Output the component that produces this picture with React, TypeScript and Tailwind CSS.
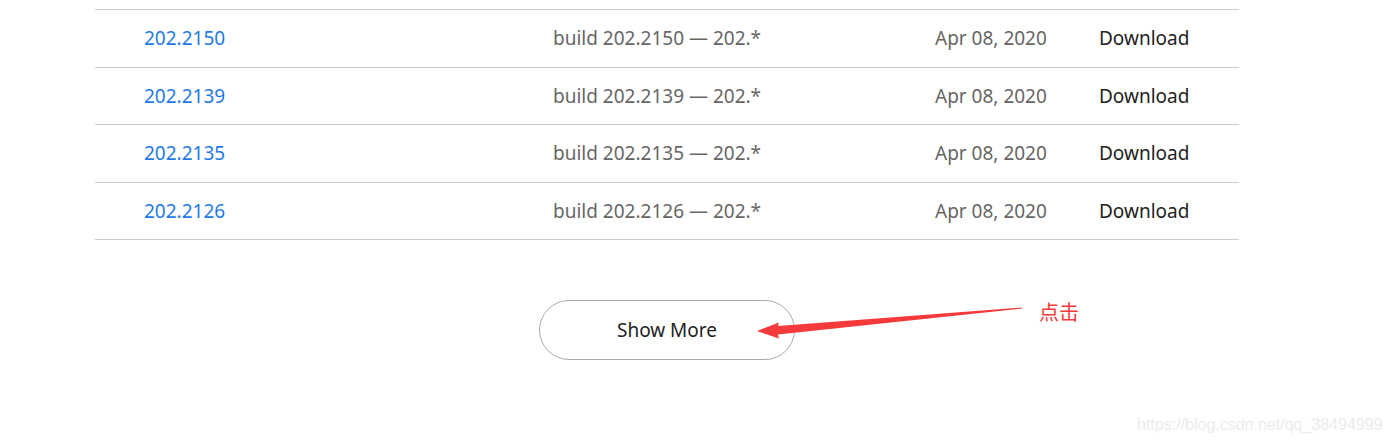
const rows = [
  { v: "202.2150", h: "h-[58px]" },
  { v: "202.2139", h: "h-[57px]" },
  { v: "202.2135", h: "h-[58px]" },
  { v: "202.2126", h: "h-[57px]" },
];

export default function App() {
  return (
    <div className="relative w-[1389px] h-[442px] bg-white overflow-hidden" style={{ fontFamily: '"Noto Sans", "Open Sans", sans-serif' }}>
      <div className="pt-[9px] pl-[95px]">
        <div className="w-[1144px] border-t border-[#cccccc]">
          {rows.map((r) => (
            <div key={r.v} className={`flex items-center border-b border-[#cccccc] text-[19px] ${r.h}`}>
              <span className="w-[458px] pl-[49px] text-[#1f7ae6]">{r.v}</span>
              <span className="w-[382px] text-[#666666]">build {r.v} — 202.*</span>
              <span className="w-[164px] text-[#666666]">Apr 08, 2020</span>
              <span className="text-[#222222]">Download</span>
            </div>
          ))}
        </div>
      </div>
      <div className="mt-[60px] pl-[539px]">
        <button className="w-[256px] h-[60px] rounded-full border border-[#aaaaaa] text-[19px] text-[#222222] bg-white">
          Show More
        </button>
      </div>
      <svg className="absolute left-0 top-0" width="1389" height="442">
        <polygon points="1022,307.5 778,326 779,322.5 757,331 779,338.5 778,334.5 1022,308.5" fill="#f43a3a" />
      </svg>
      <span className="absolute left-[1039px] top-[297px] text-[20px] text-[#f43a3a]" style={{ fontFamily: '"Noto Sans CJK SC", sans-serif' }}>
        点击
      </span>
      <span className="absolute left-[1137px] top-[413px] text-[16px] text-[#ececec]" style={{ fontFamily: '"Liberation Sans", Arial, sans-serif' }}>
        https://blog.csdn.net/qq_38494999
      </span>
    </div>
  );
}
